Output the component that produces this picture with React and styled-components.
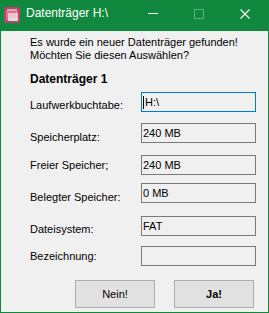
import React from 'react';
import styled, { createGlobalStyle } from 'styled-components';

const GlobalStyle = createGlobalStyle`
  html, body {
    margin: 0;
    padding: 0;
    background: #f0f0f0;
  }
  * {
    box-sizing: border-box;
  }
`;

const accent = '#10893e';

const Window = styled.div`
  width: 269px;
  height: 313px;
  border: 1px solid ${accent};
  background: #f0f0f0;
  display: flex;
  flex-direction: column;
  font-family: 'Liberation Sans', Arial, sans-serif;
  font-size: 11px;
  color: #000;
`;

const TitleBar = styled.div`
  height: 30px;
  background: ${accent};
  display: flex;
  align-items: flex-start;
  color: #fff;
`;

const AppIcon = styled.svg`
  width: 16px;
  height: 16px;
  margin: 6px 0 0 3px;
  flex: none;
`;

const Title = styled.div`
  margin: 4px 0 0 6px;
  font-size: 12px;
  line-height: 16px;
  flex: 1;
`;

const Control = styled.div`
  width: 46px;
  height: 26px;
  display: flex;
  align-items: center;
  justify-content: center;
  svg {
    width: 10px;
    height: 10px;
  }
`;

const Content = styled.div`
  padding: 5px 0 0 29px;
  display: flex;
  flex-direction: column;
`;

const Intro = styled.p`
  margin: 0;
  line-height: 13px;
`;

const Heading = styled.h3`
  margin: 10px 0 0;
  font-size: 12px;
  line-height: 14px;
  font-weight: bold;
`;

const Row = styled.div`
  display: grid;
  grid-template-columns: 111px 115px;
  margin-top: ${(p) => p.$gap}px;
`;

const Label = styled.span`
  padding-top: ${(p) => p.$offset}px;
  line-height: 13px;
  white-space: nowrap;
`;

const Field = styled.div`
  height: 20px;
  border: 1px solid ${(p) => (p.$focused ? '#0078d7' : '#7a7a7a')};
  background: #f0f0f0;
  padding: 3px 1px 0;
  line-height: 13px;
  display: flex;
  align-items: flex-start;
  white-space: nowrap;
`;

const Caret = styled.span`
  width: 1px;
  height: 13px;
  background: #000;
  margin-right: 1px;
  flex: none;
`;

const Buttons = styled.div`
  display: flex;
  gap: 19px;
  margin: 14px 0 0 45px;
`;

const Button = styled.button`
  width: 80px;
  height: 28px;
  border: 1px solid #adadad;
  background: #e1e1e1;
  font-family: 'Liberation Sans', Arial, sans-serif;
  font-size: 11px;
  font-weight: ${(p) => (p.$primary ? 'bold' : 'normal')};
  color: #000;
  padding: 0;
`;

const rows = [
  { label: 'Laufwerkbuchtabe:', value: 'H:\\', gap: 6, offset: 7, focused: true },
  { label: 'Speicherplatz:', value: '240 MB', gap: 11, offset: 8 },
  { label: 'Freier Speicher;', value: '240 MB', gap: 11, offset: 4 },
  { label: 'Belegter Speicher:', value: '0 MB', gap: 8, offset: 8 },
  { label: 'Dateisystem:', value: 'FAT', gap: 12, offset: 7 },
  { label: 'Bezeichnung:', value: '', gap: 10, offset: 4 },
];

export default function App() {
  return (
    <>
      <GlobalStyle />
      <Window>
        <TitleBar>
          <AppIcon viewBox="0 0 16 16">
            <rect x="0" y="0" width="16" height="16" rx="2" fill="#b8436f" />
            <rect x="3" y="2" width="10" height="9" fill="#e6a3b2" />
            <rect x="2" y="4" width="10" height="9" fill="#d9748e" />
            <rect x="4" y="6" width="10" height="8" fill="#eec3cc" />
            <rect x="5" y="11" width="8" height="3" fill="#cfe6d6" />
          </AppIcon>
          <Title>Datenträger H:\</Title>
          <Control>
            <svg viewBox="0 0 10 10">
              <line x1="0" y1="4.5" x2="10" y2="4.5" stroke="#fff" strokeWidth="1" />
            </svg>
          </Control>
          <Control>
            <svg viewBox="0 0 10 10">
              <rect x="0.5" y="0.5" width="9" height="9" fill="none" stroke="#5fb07e" strokeWidth="1" />
            </svg>
          </Control>
          <Control>
            <svg viewBox="0 0 10 10">
              <path d="M0.5 0.5 L9.5 9.5 M9.5 0.5 L0.5 9.5" stroke="#fff" strokeWidth="1.1" />
            </svg>
          </Control>
        </TitleBar>
        <Content>
          <Intro>
            Es wurde ein neuer Datenträger gefunden!
            <br />
            Möchten Sie diesen Auswählen?
          </Intro>
          <Heading>Datenträger 1</Heading>
          {rows.map((r) => (
            <Row key={r.label} $gap={r.gap}>
              <Label $offset={r.offset}>{r.label}</Label>
              <Field $focused={r.focused}>
                {r.focused && <Caret />}
                {r.value}
              </Field>
            </Row>
          ))}
          <Buttons>
            <Button>Nein!</Button>
            <Button $primary>Ja!</Button>
          </Buttons>
        </Content>
      </Window>
    </>
  );
}
